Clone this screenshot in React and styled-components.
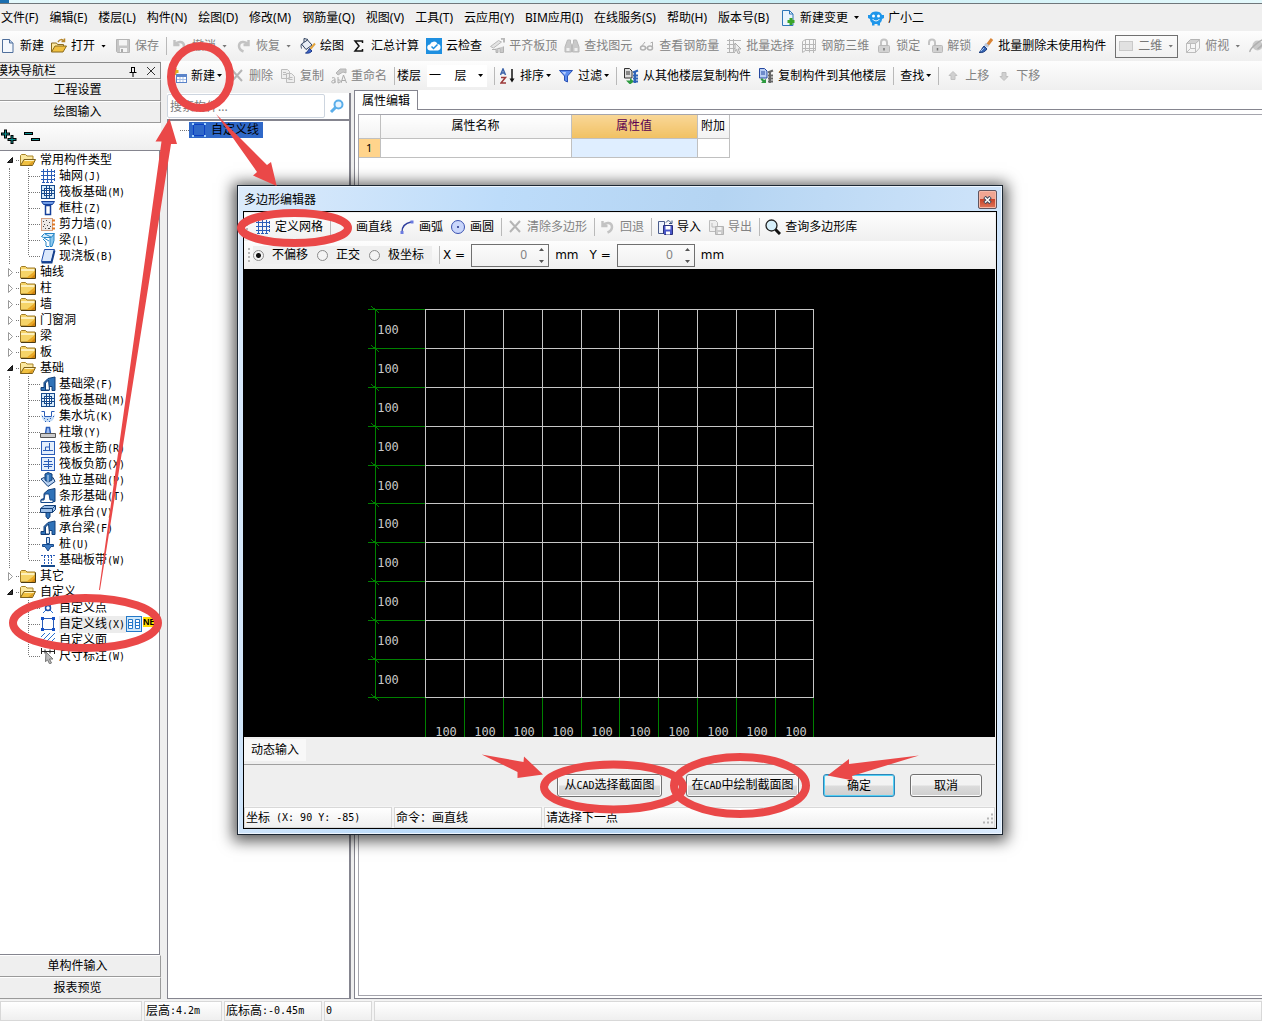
import React from "react";
import styled, { createGlobalStyle, css } from "styled-components";

const UI_FONT = `"Noto Sans", "Noto Sans CJK SC", sans-serif`;
const MONO_FONT = `"DejaVu Sans Mono", "Noto Sans CJK SC", monospace`;

const GlobalStyle = createGlobalStyle`
  * {
    box-sizing: border-box;
  }
  body {
    margin: 0;
    background: #efefef;
    color: #000;
    font-family: ${UI_FONT};
    font-size: 12px;
    line-height: 16px;
  }
  button,
  input,
  select {
    font: inherit;
    color: inherit;
    margin: 0;
  }
  ul {
    list-style: none;
    margin: 0;
    padding: 0;
  }
`;

/* ---------- icons ---------- */

const BLUE = "#2a5db8";

const folderClosed = (
  <>
    <path d="M0.500 3.500l1-1h4l1.500 1.500h8v10h-14.500z" fill="#f6d468" stroke="#a07c28" />
    <path d="M1 5h13.500v2h-13.500z" fill="#fdf0bc" />
    <path d="M6 14l9-7v7z" fill="#e8a928" />
    <path d="M11 14l4-4v4z" fill="#cf8410" />
    <path d="M1 14.500h14.500v-10" fill="none" stroke="#4c3c14" />
  </>
);

const folderOpen = (
  <>
    <path d="M0.500 13.500v-10l1-1h4l1.500 1.500h6v3.500" fill="#fbe8a0" stroke="#a88428" />
    <path d="M0.500 13.500l3.500-6h11.500l-3 6z" fill="#f0c040" stroke="#7d611d" />
    <path d="M4.500 8.500h9.500" stroke="#fff3c0" />
    <path d="M8 13l6-4.500-2 4.500z" fill="#dd9c20" />
  </>
);

const rods = (color) => (
  <path
    d="M1 3.500h14M1 7.500h14M1 11.500h14M3.500 1v14M7.500 1v14M11.500 1v14"
    fill="none"
    stroke={color}
  />
);

const raft = (
  <>
    <rect x="1.500" y="1.500" width="13" height="13" fill="#d8ebfa" stroke="#174a8c" />
    <rect x="4.500" y="4.500" width="7" height="7" fill="#fff" stroke="#174a8c" />
    <path d="M6.500 1v14M9.500 1v14M1 6.500h14M1 9.500h14" fill="none" stroke="#174a8c" />
  </>
);

const beamBlock = (
  <>
    <path d="M1 14.500v-3h3v-5l4-4 7-1.500v13.500h-3v-4h-3v4z" fill="#2f72b8" stroke="#123f78" />
    <path d="M5.500 14v-7l3-3 1 10z" fill="#fff" stroke="#123f78" />
  </>
);

const undoArrow = (
  <path d="M2.500 2v5h5M3 6.500c3-4 9-3 9 1.500 0 3-2 4.500-4.500 5.500" fill="none" stroke="#c3c3c3" strokeWidth="2.500" />
);

const ICONS = {
  newFile: (
    <>
      <path d="M2.500 1.500h7l3.500 3.500v9.500h-10.500z" fill="#f4f8fd" stroke="#4f6f9c" />
      <path d="M9.500 1.500v3.500h3.500" fill="#bcd0ea" stroke="#4f6f9c" />
    </>
  ),
  open: (
    <>
      <path d="M0.500 14v-9h5l1 1.500h6v3" fill="#fbe8a0" stroke="#8a6a1e" />
      <path d="M0.500 14l3.500-6h11.500l-3.500 6z" fill="#f0c040" stroke="#8a6a1e" />
      <path d="M7 4c2-3 4-3 6-1M13.500 0.500v3h-3" fill="none" stroke="#b5852a" strokeWidth="1.500" />
    </>
  ),
  save: (
    <>
      <path d="M1.500 1.500h13v13h-12l-1-1z" fill="#c6c6c6" stroke="#b4b4b4" />
      <path d="M4 2h8v5.500h-8z" fill="#f4f4f4" />
      <path d="M5 10h7v4h-7z" fill="#f4f4f4" />
      <path d="M6 11h2v3h-2z" fill="#aaa" />
    </>
  ),
  undo: undoArrow,
  redo: <g transform="translate(15 0) scale(-1 1)">{undoArrow}</g>,
  paint: (
    <>
      <path d="M1.500 6l6-4 4.500 5-6 4.500z" fill="#e9eef5" stroke="#2c3e5c" />
      <path d="M1.500 6c-1 2 0 3.500 0 4.500M4 4v-3.500l4 1" fill="none" stroke="#2c3e5c" />
      <path d="M15 5.500l-6 7" stroke="#e2a33a" strokeWidth="2" />
      <path d="M9.500 10.500l2.500 2.500c-1.500 2-4 2.500-6.500 2 2-1 2.500-2.500 4-4.500z" fill="#3b62c4" stroke="#1e3b8a" />
    </>
  ),
  sigma: <path d="M11.500 5v-2h-7.500l4 5-4 5h7.500v-2" fill="none" stroke="#111" strokeWidth="1.500" />,
  cloud: (
    <>
      <rect width="16" height="16" fill="#1e8fe0" />
      <path d="M4.500 12.500a3 3 0 0 1-.5-6 4 4 0 0 1 7.500-.5 3.300 3.300 0 0 1 .5 6.500z" fill="#fff" />
      <path d="M5.500 8.500l2 2 4-4" fill="none" stroke="#1e8fe0" strokeWidth="1.500" />
    </>
  ),
  slabTop: (
    <>
      <path d="M1.500 8.500l8-6 3 1.500-8 6z" fill="#e3e3e3" stroke="#bababa" />
      <path d="M3 11.500h4v3h2v-4h2v4h3.500v-6" fill="#c9c9c9" stroke="#b2b2b2" />
      <path d="M12 1l3-.5v4" fill="none" stroke="#bababa" strokeWidth="2" />
    </>
  ),
  binoculars: (
    <>
      <path d="M3.500 2h3v3l1 1.500v7.500h-6.500v-5zM9.500 2h3l2.500 7v5h-6.500v-7.500l1-1.500z" fill="#c9c9c9" stroke="#b9b9b9" />
      <path d="M2.500 10h3v3h-3zM10.500 10h3v3h-3z" fill="#efefef" />
    </>
  ),
  glasses: (
    <>
      <ellipse cx="4" cy="10" rx="2.500" ry="2" fill="none" stroke="#b0b0b0" strokeWidth="1.500" />
      <ellipse cx="11" cy="10" rx="2.500" ry="2" fill="none" stroke="#b0b0b0" strokeWidth="1.500" />
      <path d="M6.500 10h2M2 9l4-5M13.500 10v-6l-2 1" fill="none" stroke="#b0b0b0" />
    </>
  ),
  batch: (
    <>
      <path d="M1 2.500h14M1 6.500h8M1 10.500h8M1 14.500h8M3.500 1v14M7.500 1v14" fill="none" stroke="#b5b5b5" />
      <path d="M9 5l6 6h-3l2 4-2 .5-1.500-4-1.500 2z" fill="#eee" stroke="#ababab" />
    </>
  ),
  rebar3d: (
    <path d="M1.500 3.500l3-2v11l-3 2zM4.500 1.500h10v11h-10M8.500 1.500v13M12.500 1v14M1 6.500h14M1 10.500h14" fill="none" stroke="#b8b8b8" />
  ),
  lock: (
    <>
      <path d="M5 8v-3.500a3 3 0 0 1 6 0v3.500" fill="none" stroke="#c4c4c4" strokeWidth="2" />
      <rect x="2.500" y="7.500" width="11" height="7" rx="1" fill="#d2d2d2" stroke="#b9b9b9" />
      <path d="M8 10v2.500" stroke="#777" strokeWidth="1.500" />
    </>
  ),
  unlock: (
    <>
      <path d="M2 7v-2.500a3 3 0 0 1 6 0v3" fill="none" stroke="#c4c4c4" strokeWidth="2" />
      <rect x="5.500" y="7.500" width="10" height="7" rx="1" fill="#d2d2d2" stroke="#b9b9b9" />
      <path d="M10.500 10v2.500" stroke="#777" strokeWidth="1.500" />
    </>
  ),
  brush: (
    <>
      <path d="M14 1l-5 6.500" stroke="#d98436" strokeWidth="3" />
      <path d="M9.500 6l-2 2.500" stroke="#b9c6da" strokeWidth="4" />
      <path d="M6 8l3 3c-2 3-5 4-8 3.500 2.500-1.500 2.500-4 5-6.500z" fill="#3867b4" stroke="#1f3f80" />
      <path d="M3 13l3-3" stroke="#a9c8f4" />
    </>
  ),
  plane: <rect x="1.500" y="3.500" width="13" height="9" fill="#e1e1e1" stroke="#c9c9c9" />,
  cube: (
    <>
      <path d="M1.500 5.500l4-4h9.500l-4.500 4z" fill="#d2d2d2" stroke="#b3b3b3" />
      <path d="M1.500 5.500h9v9h-9zM10.500 5.500l4-4v8.500l-4 4.500M5.500 5.500v5l-4 4M5.500 10.500h5" fill="none" stroke="#bdbdbd" />
    </>
  ),
  orbit: (
    <>
      <circle cx="8.500" cy="7.500" r="5" fill="#c9c9c9" />
      <path d="M1 14c-1-3 12-14 14.500-12 1 2-4 7-7 9" fill="none" stroke="#b0b0b0" strokeWidth="1.500" />
    </>
  ),
  docPlus: (
    <>
      <path d="M2.500 0.500h7l3.500 3.500v11.500h-10.500z" fill="#eaf4fd" stroke="#2f77b8" />
      <path d="M9.500 0.500v3.500h3.500" fill="none" stroke="#2f77b8" />
      <path d="M11 8v7M7.500 11.500h7" stroke="#3aa528" strokeWidth="3" />
    </>
  ),
  robot: (
    <>
      <path d="M2 5c1-2.500 3-3.500 6-3.500s5 1 6 3.500h2v3l-2 1c0 2-1 3-2 4v2.500h-2.500v-1.500h-3v1.500h-2.500v-2.500c-1-1-2-2-2-4l-2-1v-3z" fill="#1f96ea" />
      <circle cx="5.500" cy="6" r="1.500" fill="#fff" />
      <circle cx="10.500" cy="6" r="1.500" fill="#fff" />
      <path d="M4.500 9c2 2.500 5 2.500 7 0" fill="none" stroke="#fff" />
    </>
  ),
  newItem: (
    <>
      <path d="M4 0v7M0.500 3.500h7" stroke="#e0b020" strokeWidth="3" />
      <rect x="5.500" y="6.500" width="10" height="8" fill="#fff" stroke="#5b84c9" />
      <path d="M6 8h9" stroke="#5b84c9" strokeWidth="2" />
      <path d="M6 11.500h9M9 9v5M12 9v5" stroke="#a9c1e8" />
    </>
  ),
  cross: <path d="M3 2l10 11M13 2l-10 11" stroke="#b5b5b5" strokeWidth="2" />,
  copy: (
    <path d="M1.500 1.500h6l2 2v7h-8zM6.500 5.500h5l3 3v6h-8zM3 4.500h3M3 6.500h3M8.500 9.500h4M8.500 11.500h4" fill="#eee" stroke="#bdbdbd" />
  ),
  rename: (
    <>
      <path d="M5 5l4-4h6v4l-3-1-5 3z" fill="#c9c9c9" stroke="#b5b5b5" />
      <path d="M1 10c2-1 3 0 3 1v4M4 12c-4 0-4 3-2 3s2-1 2-2M7 15v-6M7 12c3-1 3 3 0 3M10 15l2.500-8 3 8M11 12.500h3" fill="none" stroke="#aaa" />
    </>
  ),
  sort: (
    <>
      <path d="M0.500 7l2.500-6 2.500 6M1.500 5h3" fill="none" stroke="#3c62a8" strokeWidth="1.500" />
      <path d="M1 9.500h4.500l-4.500 5.500h5" fill="none" stroke="#9d3a3a" strokeWidth="1.500" />
      <path d="M12 1v12" stroke="#111" strokeWidth="1.500" />
      <path d="M9.500 10.500h5l-2.500 4z" fill="#111" />
    </>
  ),
  filter: (
    <>
      <path d="M1.500 2.500h13l-5 5.500v6l-3-1.500v-4.500z" fill="#5c8df0" stroke="#2a52b4" />
      <path d="M4 4h4l-1 3z" fill="#b9d0fb" />
    </>
  ),
  copyFrom: (
    <>
      <path d="M1.500 0.500h5l2.500 2.500v7h-7.500z" fill="#ddd" stroke="#333" />
      <path d="M3 4h4M3 6h4" stroke="#333" />
      <path d="M3 12.500h4v-2.500l4 3.500-4 3z" fill="#2d9a3f" />
      <path d="M10 4.500l5-2M10 7.500h5M10 10.500h5M10 13.500h5M12 3v12" stroke="#2d63b8" strokeWidth="2" />
    </>
  ),
  copyTo: (
    <>
      <path d="M1.500 0.500h5l2.500 2.500v7h-7.500z" fill="#b9cdf3" stroke="#2548a0" />
      <path d="M3 4h4M3 6h4" stroke="#2548a0" />
      <path d="M8 11v4h-5l1.500-1.500-2-2 1.500-1.500 2 2z" fill="#2d9a3f" />
      <path d="M10 4.500l5-2M10 7.500h5M10 10.500h5M10 13.500h5M12 3v12" stroke="#666" strokeWidth="2" />
    </>
  ),
  up: <path d="M8 3.500l4 4h-2v4h-4v-4h-2z" fill="#d0d0d0" stroke="#c0c0c0" />,
  down: <path d="M8 12.500l4-4h-2v-4h-4v4h-2z" fill="#d0d0d0" stroke="#c0c0c0" />,
  grid: (
    <>
      {rods(BLUE)}
      <path d="M14.500 2v12" stroke={BLUE} strokeDasharray="3 1" />
      <path d="M2 14.500h12" stroke={BLUE} strokeDasharray="3 1" />
    </>
  ),
  arc: (
    <>
      <path d="M3 13c0-6 4-9 9-10" fill="none" stroke="#2c3c9c" strokeWidth="1.300" />
      <path d="M11.500 1.500h3v3h-3zM1.500 12h3v3h-3z" fill="#6b7be0" />
    </>
  ),
  circle: (
    <>
      <circle cx="8" cy="8" r="6.500" fill="#c9d6fb" stroke="#3a50b0" />
      <circle cx="8" cy="8" r="1" fill="#1f2c80" />
    </>
  ),
  importFile: (
    <>
      <path d="M1.500 2.500h6v12h-6z" fill="#eef3fc" stroke="#4a5c8c" />
      <path d="M6.500 6.500h9v9h-8l-1-1z" fill="#4a57c8" stroke="#28307c" />
      <path d="M8.500 7h5v3.500h-5zM9 12.500h4v3h-4z" fill="#fff" />
      <path d="M9 3.500c2-3 4-2 5 1M15 1.500v3h-3" fill="none" stroke="#35507c" />
    </>
  ),
  exportFile: (
    <>
      <path d="M1.500 1.500h6l2 2v9h-8z" fill="#eee" stroke="#bcbcbc" />
      <path d="M7.500 7.500h8v8h-8z" fill="#ccc" stroke="#b2b2b2" />
      <path d="M9.500 8h4v3h-4zM10 13h3v2h-3z" fill="#f3f3f3" />
      <path d="M4 4v4h4" fill="none" stroke="#bcbcbc" />
    </>
  ),
  magnifier: (
    <>
      <circle cx="6.500" cy="6.500" r="5.500" fill="#d6effa" stroke="#222" strokeWidth="1.300" />
      <path d="M10.500 10.500l4.500 4.500" stroke="#111" strokeWidth="3" />
    </>
  ),
  search: (
    <>
      <circle cx="9.500" cy="6.500" r="4" fill="#e6f4ff" stroke="#5aaeea" strokeWidth="2" />
      <path d="M6.500 9.500l-4.500 4.500" stroke="#5aaeea" strokeWidth="3" />
    </>
  ),
  folderClosed,
  folderOpen,
  raft,
  column: (
    <>
      <path d="M1.500 1.500h13l-2 3h-9z" fill="#6f9be6" stroke="#16409a" />
      <path d="M5.500 5.500h5v9h-5z" fill="#fff" stroke="#16409a" strokeWidth="1.500" />
    </>
  ),
  shearWall: (
    <>
      <rect x="1.500" y="2.500" width="11" height="12" fill="#ece8e6" stroke="#d4a184" />
      <path d="M3 5.500h1M6 4.500h1M9 6.500h1M4 8.500h1M7 9.500h1M10 10.500h1M5 12.500h1M8 12.500h2M3 10.500h1" stroke="#444" />
      <path d="M12 4.500h3M12 8.500h3M12 12.500h3" stroke="#e07a26" strokeWidth="2" />
    </>
  ),
  beam: (
    <>
      <path d="M1.500 4.500l3-3h10l-3 4h-8z" fill="#d5ecfb" stroke="#2787c8" />
      <path d="M10 14.500v-8l4-4v6l-2 6z" fill="#8cc8ee" stroke="#2787c8" />
      <path d="M4 6l5 3M6 14v-4l-3-3M6 14.500h3M5 2l6 3" fill="none" stroke="#2787c8" />
    </>
  ),
  slab: (
    <>
      <path d="M4.500 1.500h10l-3 12h-10z" fill="#dbe8fb" stroke="#1f4fae" />
      <path d="M1.500 14.500h10l3-12" fill="none" stroke="#16408c" strokeWidth="2" />
    </>
  ),
  beamBlock,
  pit: (
    <>
      <path d="M1 6c1 6 3 8 7 8s6-2 7-8l-3 3h-8z" fill="#c3dbf6" />
      <path d="M1.500 3.500h3v5h7v-5h3" fill="none" stroke={BLUE} />
      <path d="M2 8.500h1M4 10.500h1M7 11.500h1M10 10.500h1M13 8.500h1M5 13.500h1M9 13.500h1" stroke={BLUE} />
    </>
  ),
  pier: (
    <>
      <path d="M5.500 9.500l1-6h3l1 6" fill="#9dbcf0" stroke={BLUE} strokeWidth="1.500" />
      <path d="M0.500 9.500h15v4h-15z" fill="#ccc" stroke="#555" />
    </>
  ),
  mainBar: (
    <>
      <rect x="1.500" y="1.500" width="13" height="13" fill="#e3eefc" stroke={BLUE} />
      <path d="M3 10.500h10M5.500 10v-3h4M9.500 3v8" fill="none" stroke={BLUE} />
    </>
  ),
  negBar: (
    <>
      <rect x="1.500" y="1.500" width="13" height="13" fill="#e3eefc" stroke={BLUE} />
      <path d="M8.500 3v10M4 5.500h8M4 10.500h8M3 8.500h10" fill="none" stroke={BLUE} />
    </>
  ),
  isolated: (
    <>
      <path d="M1 7l7 7.500 7-5-2-4-5 3-4-3z" fill="#b9d2f2" stroke="#123f78" />
      <path d="M5 2l3-1.500 4 1.500v6l-4 2-3-2z" fill="#2f72b8" stroke="#123f78" />
      <path d="M8 3v7" stroke="#cfe2f8" />
    </>
  ),
  strip: (
    <>
      <path d="M1 14.500v-3l3-1v-5l4-3.500 7-1.500v13z" fill="#2f72b8" stroke="#123f78" />
      <path d="M1 14.500v-2.500h3l1-6h4l1 6h3v2.500z" fill="#fff" stroke="#174a8c" />
    </>
  ),
  cap: (
    <>
      <path d="M0.500 4.500l4-3h11v4l-3 3h-12z" fill="#9dbfe8" stroke="#123f78" />
      <path d="M1 4.500h11.500v4M12.500 4.500l3-3" fill="none" stroke="#123f78" />
      <path d="M6 8.500h4v4l-2 2.500-2-2.500z" fill="#2f72b8" stroke="#123f78" />
    </>
  ),
  pile: (
    <>
      <path d="M6.500 1.500h3v6h-3z" fill="#cfe0f6" stroke="#174a8c" />
      <path d="M2.500 8.500h11v2h-2.500l-3 4.500-3-4.500h-2.500z" fill="#3f7cc4" stroke="#174a8c" />
    </>
  ),
  band: (
    <>
      <path d="M1 13.500h14M1 14.500h14" stroke="#174a8c" />
      <path d="M1 3.500h14" stroke={BLUE} strokeDasharray="2 1" />
      <path d="M4.500 4v9M8.500 4v9M11.500 4v9" stroke={BLUE} strokeDasharray="2 1" />
    </>
  ),
  customPoint: (
    <>
      <path d="M3 3l10 10M13 3l-10 10" stroke="#2a6fd0" />
      <circle cx="8" cy="8" r="2.500" fill="#fff" stroke="#1c4fa8" strokeWidth="1.500" />
    </>
  ),
  customLine: (
    <>
      <rect x="2.500" y="2.500" width="11" height="11" fill="none" stroke={BLUE} />
      <path d="M1 1h3v3h-3zM12 1h3v3h-3zM1 12h3v3h-3zM12 12h3v3h-3z" fill="#1450c8" />
    </>
  ),
  customLineSelected: (
    <>
      <rect x="2.500" y="2.500" width="11" height="11" fill="none" stroke="#0a3fc4" />
      <path d="M1 1h2v2h-2zM13 1h2v2h-2zM1 13h2v2h-2zM13 13h2v2h-2z" fill="#9fd0ff" />
    </>
  ),
  customFace: (
    <path d="M1 5l4-4M1 10l9-9M1 15l14-14M6 15l9-9M11 15l4-4" fill="none" stroke="#2a6fd0" />
  ),
  dimension: (
    <>
      <path d="M1.500 0v6M14.500 0v6M2 3.500h12M5 1.500v4M10 1.500v4" fill="none" stroke="#222" />
      <path d="M6 4l7 7h-3.500l2 4-2 .8-2-4-2 2z" fill="#bbb" stroke="#777" />
    </>
  ),
  columns: (
    <>
      <rect x="0.500" y="0.500" width="15" height="15" fill="#cfe8fb" stroke="#2478c8" />
      <path d="M2.500 3.500h4v9h-4zM9.500 3.500h4v9h-4zM2.500 6.500h4M2.500 9.500h4M9.500 6.500h4M9.500 9.500h4" fill="#fff" stroke="#2478c8" />
    </>
  ),
};

const StyledSvg = styled.svg`
  display: block;
  flex: none;
`;

const Icon = ({ name }) => (
  <StyledSvg width="16" height="16" viewBox="0 0 16 16" aria-hidden="true">
    {ICONS[name]}
  </StyledSvg>
);

/* ---------- shared controls ---------- */

const plainButton = css`
  border: 0;
  padding: 0;
  background: none;
  white-space: nowrap;
`;

const StyledToolButton = styled.button`
  ${plainButton}
  display: flex;
  align-items: center;
  gap: 4px;
  height: 24px;
  color: ${({ disabled }) => (disabled ? "#838383" : "#000")};
`;

const StyledCaret = styled.span`
  flex: none;
  width: 5px;
  height: 3px;
  margin: ${({ $tight }) => ($tight ? "0 0 0 -2px" : "0 2px")};
  background: ${({ $muted }) => ($muted ? "#777" : "#000")};
  clip-path: polygon(0 0, 100% 0, 50% 100%);
`;

const StyledSeparator = styled.span`
  flex: none;
  width: 1px;
  height: 18px;
  margin-right: ${({ $close }) => ($close ? -2 : -1)}px;
  background: #b9b9b9;
`;

const ToolButton = ({ icon, label, disabled, caret, tight }) => (
  <StyledToolButton type="button" disabled={disabled}>
    {icon && <Icon name={icon} />}
    {label}
    {caret && <StyledCaret $muted={disabled} $tight={tight} />}
  </StyledToolButton>
);

const StyledLatin = styled.span`
  font-family: ${MONO_FONT};
  font-size: 10px;
`;

// the narrow half-width letters sit beside 12px ideographs
const MonoText = ({ children }) =>
  children
    .split(/([\x20-\x7e]+)/)
    .map((part, i) => (i % 2 ? <StyledLatin key={i}>{part}</StyledLatin> : part));

/* ---------- window frame ---------- */

const StyledApp = styled.div`
  position: relative;
  display: flex;
  flex-direction: column;
  min-height: 100vh;
  overflow: hidden;
`;

const StyledTitleStrip = styled.div`
  height: 4px;
  border-bottom: 1px solid #70777b;
  background: linear-gradient(90deg, #1b6fb0 9px, #e4f9fc 9px, #c9eef5 60%, #e4f9fc);
`;

const StyledMenuBar = styled.nav`
  display: flex;
  align-items: center;
  gap: 11px;
  height: 27px;
  padding-left: 1px;
  background: #efefef;
`;

const StyledMenuButton = styled.button`
  ${plainButton}
`;

const StyledMenuExtras = styled.div`
  display: flex;
  gap: 7px;
`;

const StyledToolbar = styled.div`
  display: flex;
  align-items: center;
  gap: 7px;
  height: ${({ $height }) => $height || 30}px;
  padding-left: ${({ $inset }) => $inset || 0}px;
  background: linear-gradient(#fdfdfd, #efefef);
`;

const StyledModePicker = styled.button`
  ${plainButton}
  display: flex;
  align-items: center;
  gap: 4px;
  height: 23px;
  margin-left: 2px;
  padding: 0 2px;
  border: 1px solid #707070;
  color: #777;
`;

const StyledBody = styled.div`
  display: flex;
  flex: 1;
  min-height: 0;
`;

/* ---------- navigation sidebar ---------- */

const StyledSidebar = styled.aside`
  display: flex;
  flex-direction: column;
  flex: none;
  width: 161px;
  padding-bottom: 1px;
`;

const StyledSidebarTitle = styled.header`
  display: flex;
  align-items: center;
  justify-content: space-between;
  height: 17px;
  margin-top: 1px;
  padding-right: 4px;
  border: 1px solid #8a8a8a;
  border-left: 0;

  h2 {
    margin: 0 0 0 -4px;
    font-size: 12px;
    font-weight: normal;
  }

  svg {
    flex: none;
  }
`;

const StyledNavButton = styled.button`
  flex: none;
  height: 22px;
  padding: 0 5px 0 0;
  border: 1px solid #9a9a9a;
  border-left: 0;
  border-top-color: #fff;
  background: #efefef;
`;

const StyledExpandBar = styled.div`
  display: flex;
  align-items: center;
  gap: 6px;
  height: 28px;
  border-bottom: 1px solid #85858f;
  background: linear-gradient(#fdfdfd, #efefef);
`;

const StyledTree = styled.ul`
  flex: 1;
  margin-right: 1px;
  padding-top: 1px;
  border-right: 1px solid #85858f;
  border-bottom: 1px solid #85858f;
  background: #fff;
`;

const StyledGroupRow = styled.div`
  display: flex;
  align-items: center;
  height: 16px;
  padding-left: 6px;
  white-space: nowrap;

  > span {
    margin-left: 4px;
  }
`;

const StyledChildren = styled.ul`
  margin-left: 9px;
  padding-left: ${({ $last }) => ($last ? 19 : 18)}px;
  border-left: ${({ $last }) => ($last ? "0" : "1px dotted #777")};
`;

const StyledLeaf = styled.li`
  display: flex;
  align-items: center;
  height: 16px;
  white-space: nowrap;

  > span {
    margin-left: 3px;
    padding-right: 1px;
    background: ${({ $current }) => ($current ? "#ececec" : "none")};
  }
`;

const StyledBadge = styled.b`
  width: 14px;
  height: 10px;
  margin: 0 0 5px 1px;
  background: #ffdc00;
  font: bold 9px/10px "Liberation Sans", sans-serif;
`;

const TREE = [
  {
    label: "常用构件类型",
    open: true,
    items: [
      ["grid", "轴网(J)"],
      ["raft", "筏板基础(M)"],
      ["column", "框柱(Z)"],
      ["shearWall", "剪力墙(Q)"],
      ["beam", "梁(L)"],
      ["slab", "现浇板(B)"],
    ],
  },
  { label: "轴线" },
  { label: "柱" },
  { label: "墙" },
  { label: "门窗洞" },
  { label: "梁" },
  { label: "板" },
  {
    label: "基础",
    open: true,
    items: [
      ["beamBlock", "基础梁(F)"],
      ["raft", "筏板基础(M)"],
      ["pit", "集水坑(K)"],
      ["pier", "柱墩(Y)"],
      ["mainBar", "筏板主筋(R)"],
      ["negBar", "筏板负筋(X)"],
      ["isolated", "独立基础(P)"],
      ["strip", "条形基础(T)"],
      ["cap", "桩承台(V)"],
      ["beamBlock", "承台梁(F)"],
      ["pile", "桩(U)"],
      ["band", "基础板带(W)"],
    ],
  },
  { label: "其它" },
  {
    label: "自定义",
    open: true,
    items: [
      ["customPoint", "自定义点"],
      ["customLine", "自定义线(X)"],
      ["customFace", "自定义面"],
      ["dimension", "尺寸标注(W)"],
    ],
  },
];

const Branch = ({ last }) => (
  <StyledSvg width="12" height="16" aria-hidden="true">
    <path
      d={`M0.5 0v${last ? 8 : 16}M1 8.500h11`}
      fill="none"
      stroke="#777"
      strokeDasharray="1 1"
    />
  </StyledSvg>
);

const Twisty = ({ open }) => (
  <StyledSvg width="14" height="16" aria-hidden="true">
    {open ? (
      <path d="M6.500 5.500v5h-5z" fill="#333" stroke="#111" />
    ) : (
      <path d="M2.500 4.500l4 4-4 4z" fill="#fff" stroke="#9a9a9a" />
    )}
    <path d="M10 8.500h4" stroke="#777" strokeDasharray="1 1" />
  </StyledSvg>
);

const ComponentTree = () => (
  <StyledTree>
    {TREE.map(({ label, open, items }, groupIndex) => (
      <li key={label}>
        <StyledGroupRow>
          <Twisty open={open} />
          <Icon name={open ? "folderOpen" : "folderClosed"} />
          <span>{label}</span>
        </StyledGroupRow>
        {items && (
          <StyledChildren $last={groupIndex === TREE.length - 1}>
            {items.map(([icon, text], i) => {
              const current = text === "自定义线(X)";
              return (
                <StyledLeaf key={text} $current={current}>
                  <Branch last={i === items.length - 1} />
                  <Icon name={icon} />
                  <span>
                    <MonoText>{text}</MonoText>
                  </span>
                  {current && (
                    <>
                      <Icon name="columns" />
                      <StyledBadge>NE</StyledBadge>
                    </>
                  )}
                </StyledLeaf>
              );
            })}
          </StyledChildren>
        )}
      </li>
    ))}
  </StyledTree>
);

const Sidebar = () => (
  <StyledSidebar>
    <StyledSidebarTitle>
      <h2>模块导航栏</h2>
      <svg width="28" height="12" aria-hidden="true">
        <path d="M3.500 2v5M6.500 2v5M3 2.500h4M1.500 7.500h7M5 8v4" stroke="#000" />
        <path d="M19 2l8 8M27 2l-8 8" stroke="#333" />
      </svg>
    </StyledSidebarTitle>
    <StyledNavButton type="button">工程设置</StyledNavButton>
    <StyledNavButton type="button">绘图输入</StyledNavButton>
    <StyledExpandBar>
      <svg width="17" height="16" aria-hidden="true">
        <path d="M5.500 0.500v9M1 5h9M12 6v9M7.500 10.500h9" stroke="#000" strokeWidth="3" />
        <path d="M5.500 1.500v7M2 5h7M12 7v7M8.500 10.500h7" stroke="#0c9090" />
      </svg>
      <svg width="18" height="16" aria-hidden="true">
        <path d="M1 4.500h9M8 10.500h9" stroke="#000" strokeWidth="3" />
        <path d="M2 4.500h7M9 10.500h7" stroke="#0c9090" />
      </svg>
    </StyledExpandBar>
    <ComponentTree />
    <StyledNavButton type="button">单构件输入</StyledNavButton>
    <StyledNavButton type="button">报表预览</StyledNavButton>
  </StyledSidebar>
);

/* ---------- component list and properties ---------- */

const StyledMain = styled.main`
  display: flex;
  flex: 1;
  flex-direction: column;
  min-width: 0;
`;

const StyledPanels = styled.div`
  display: flex;
  flex: 1;
`;

const StyledListPanel = styled.section`
  display: flex;
  flex-direction: column;
  width: 184px;
  margin: 3px 0 1px 6px;
  border-right: 2px solid #85858f;
`;

const StyledSearchRow = styled.div`
  display: flex;
  align-items: center;
  gap: 4px;
  height: 26px;
  background: #fff;

  input {
    width: 158px;
    height: 24px;
    padding: 0 2px;
    border: 1px solid #cdd5df;
    border-radius: 2px;
    background: #fff;
  }

  input::placeholder {
    color: #7c7c7c;
    opacity: 1;
  }

  button {
    ${plainButton}
  }
`;

const StyledList = styled.ul`
  flex: 1;
  padding: 1px 0 0 12px;
  border: 1px solid #85858f;
  border-top-width: 2px;
  border-right: 0;
  background: #fff;
`;

const StyledListItem = styled.li`
  display: flex;
  align-items: center;

  &::before {
    content: "";
    width: 9px;
    border-top: 1px dotted #777;
  }
`;

const StyledSelected = styled.span`
  display: flex;
  align-items: center;
  gap: 4px;
  height: 16px;
  padding: 0 4px 0 2px;
  background: #2f68c8;
`;

const StyledPropertyPanel = styled.section`
  display: flex;
  flex: 1;
  flex-direction: column;
  margin: 0 0 1px 3px;
  background: #fff;
`;

const StyledTabRow = styled.div`
  display: flex;
  height: 20px;

  button {
    ${plainButton}
    width: 64px;
    border: 1px solid #85858f;
    border-bottom: 0;
  }

  &::after {
    content: "";
    flex: 1;
    border-bottom: 1px solid #85858f;
  }
`;

const StyledTabPage = styled.div`
  flex: 1;
  padding: 4px 0 2px 3px;
  border-left: 1px solid #85858f;
  border-bottom: 1px solid #85858f;
`;

const StyledTableFrame = styled.div`
  height: 100%;
  border: 1px solid #a5a5ad;
  border-right: 0;
`;

const StyledTable = styled.table`
  border-collapse: collapse;
  table-layout: fixed;
  width: 370px;

  th,
  td {
    padding: 0;
    border: 1px solid #c0c0c0;
    border-top: 0;
    border-left: 0;
    font-weight: normal;
    text-align: center;
    white-space: nowrap;
  }

  thead tr {
    height: 23px;
  }
  tbody tr {
    height: 19px;
  }
  thead th {
    background: linear-gradient(#fff, #f2f2f2);
  }
  thead th:nth-child(3) {
    background: linear-gradient(#f9d797, #f1c163);
    color: #5a0050;
  }
  tbody th {
    background: #ffd48c;
    font-size: 11px;
  }
  tbody td:nth-child(3) {
    background: #dfeeff;
  }
`;

const COLUMN_WIDTHS = [21, 191, 126, 32];

const PropertyTable = () => (
  <StyledTable>
    <colgroup>
      {COLUMN_WIDTHS.map((width) => (
        <col key={width} width={width} />
      ))}
    </colgroup>
    <thead>
      <tr>
        <th aria-label="序号" />
        <th>属性名称</th>
        <th>属性值</th>
        <th>附加</th>
      </tr>
    </thead>
    <tbody>
      <tr>
        <th>1</th>
        <td />
        <td />
        <td />
      </tr>
    </tbody>
  </StyledTable>
);

const StyledFloorPicker = styled.div`
  display: flex;
  align-items: center;
  gap: 6px;
  margin-left: -4px;
`;

const StyledFloorValue = styled.button`
  ${plainButton}
  display: flex;
  align-items: center;
  justify-content: space-between;
  width: 60px;
  height: 22px;
  padding: 0 4px 0 2px;
  background: #fff;
`;

const ComponentToolbar = () => (
  <StyledToolbar $height={29} $inset={10}>
    <ToolButton icon="newItem" label="新建" caret tight />
    <ToolButton icon="cross" label="删除" disabled />
    <ToolButton icon="copy" label="复制" disabled />
    <ToolButton icon="rename" label="重命名" disabled />
    <StyledSeparator />
    <StyledFloorPicker>
      楼层
      <StyledFloorValue type="button">
        <span>一</span>
        <span>层</span>
        <StyledCaret $tight />
      </StyledFloorValue>
    </StyledFloorPicker>
    <StyledSeparator $close />
    <ToolButton icon="sort" label="排序" caret tight />
    <ToolButton icon="filter" label="过滤" caret tight />
    <StyledSeparator />
    <ToolButton icon="copyFrom" label="从其他楼层复制构件" />
    <ToolButton icon="copyTo" label="复制构件到其他楼层" />
    <StyledSeparator />
    <ToolButton label="查找" caret tight />
    <StyledSeparator />
    <ToolButton icon="up" label="上移" disabled />
    <ToolButton icon="down" label="下移" disabled />
  </StyledToolbar>
);

/* ---------- status bars ---------- */

const StyledStatusBar = styled.footer`
  display: flex;
  gap: 2px;
  height: ${({ $height }) => $height || 21}px;
  padding-top: 1px;
  background: #f4f4f4;
`;

const StyledStatusCell = styled.span`
  display: flex;
  align-items: center;
  flex: ${({ $width }) => ($width ? "none" : 1)};
  width: ${({ $width }) => ($width ? `${$width}px` : "auto")};
  padding-left: 1px;
  border: 1px solid #d8d8d8;
  background: linear-gradient(#fff, #efefef);
  white-space: pre;
`;

/* ---------- polygon editor ---------- */

const StyledDialog = styled.section`
  position: absolute;
  top: 185px;
  left: 237px;
  display: flex;
  flex-direction: column;
  width: 766px;
  padding: 0 5px 5px;
  border: 1px solid #1c2733;
  background: linear-gradient(100deg, #dcebfb, #bddcfa 30%, #b4d4f2 55%, #d9eafd);
  box-shadow: inset 0 0 0 1px #eef6ff, 0 2px 14px 4px rgba(0, 0, 0, 0.65);
`;

const StyledDialogTitle = styled.header`
  display: flex;
  align-items: center;
  justify-content: space-between;
  height: 25px;
  padding: 2px 0 0 1px;

  h1 {
    margin: 0;
    font-size: 12px;
    font-weight: normal;
  }

  button {
    display: flex;
    align-items: center;
    justify-content: center;
    width: 19px;
    height: 19px;
    padding: 0;
    border: 1px solid #5f5560;
    border-radius: 2px;
    background: linear-gradient(#f0a592 45%, #c8432a 50%, #e0765a);
    box-shadow: inset 0 0 0 1px #f6b9a8;
  }
`;

const StyledClient = styled.div`
  border: 1px solid #000;
  padding: 1px 1px 0 0;
  background: #efefef;
`;

const StyledGrip = styled.span`
  flex: none;
  width: 2px;
  height: 14px;
  background: repeating-linear-gradient(#b8b8b8 0 2px, transparent 2px 4px);
`;

const StyledLineButton = styled(StyledToolButton)`
  margin-left: 20px;
`;

const StyledRadio = styled.label`
  display: flex;
  align-items: center;
  gap: 8px;
  white-space: nowrap;

  input {
    appearance: none;
    width: 11px;
    height: 11px;
    border: 1px solid #8b8b8b;
    border-radius: 50%;
    background: #f4f4f4;
  }

  input:checked {
    background: radial-gradient(#111 0 2px, #f4f4f4 3px);
  }
`;

const StyledRadioGroup = styled.div`
  display: flex;
  align-items: center;
  gap: 9px;
  height: 18px;
  margin-left: -4px;
  padding-right: 8px;
  background: #efefef;
`;

const StyledAxis = styled.label`
  display: flex;
  align-items: center;
  gap: 6px;
  margin-left: -2px;
  padding-right: 6px;
  font-family: "DejaVu Sans", sans-serif;
  white-space: nowrap;
`;

const StyledSpin = styled.span`
  display: flex;
  align-items: center;
  width: 78px;
  height: 23px;
  padding-right: 3px;
  border: 1px solid #707070;

  input {
    flex: 1;
    min-width: 0;
    padding: 0 11px 0 0;
    border: 0;
    background: none;
    color: #838383;
    font-family: ${UI_FONT};
    text-align: right;
  }
`;

const StyledCanvas = styled.div`
  height: 468px;
  background: #000;

  svg {
    display: block;
    overflow: visible;
  }

  text {
    fill: #c8c8c8;
    font-family: ${MONO_FONT};
    font-size: 12px;
    text-anchor: middle;
  }
`;

const StyledDynamicInput = styled.div`
  height: 28px;
  padding-top: 2px;
  border-bottom: 1px solid #a0a0a0;

  button {
    ${plainButton}
    height: 22px;
    padding: 0 7px;
    background: #f8f8f8;
  }
`;

const StyledActions = styled.div`
  display: flex;
  align-items: center;
  justify-content: flex-end;
  gap: 15px;
  height: 41px;
  padding-right: 13px;
`;

const StyledPushButton = styled.button`
  height: 23px;
  width: ${({ $width }) => $width}px;
  margin-left: ${({ $apart }) => ($apart ? "9px" : 0)};
  padding: 0;
  border: 1px solid ${({ $primary }) => ($primary ? "#2f86b8" : "#707070")};
  border-radius: 3px;
  background: linear-gradient(#f3f3f3 48%, #dcdcdc 52%, #cfcfcf);
  box-shadow: inset 0 0 0 1px ${({ $primary }) => ($primary ? "#52d0f5" : "#fbfbfb")};
  white-space: nowrap;
`;

const StyledHint = styled.span`
  flex: 1;
`;

const LINES = [0, 39, 78, 117, 156, 194, 233, 272, 311, 350, 388];
const LEFT = 181;
const TOP = 40;
const SPAN = 388;

const SectionGrid = () => (
  <StyledCanvas>
    <svg width="751" height="468" shapeRendering="crispEdges">
      <path d={`M131.5 ${TOP}v${SPAN}`} stroke="#008000" />
      {LINES.map((n) => (
        <g key={n} fill="none">
          <path
            d={`M124 ${TOP + n}.5H${LEFT}M127 ${TOP + n - 3}l8 7M${LEFT + n}.5 ${TOP + SPAN}V468`}
            stroke="#008000"
          />
          <path
            d={`M${LEFT} ${TOP + n}.5h${SPAN + 1}M${LEFT + n}.5 ${TOP}v${SPAN}`}
            stroke="#c6c6c6"
          />
        </g>
      ))}
      {LINES.slice(0, -1).map((n) => (
        <g key={n}>
          <text x="144" y={TOP + n + 25}>100</text>
          <text x={LEFT + n + 21} y="467">100</text>
        </g>
      ))}
    </svg>
  </StyledCanvas>
);

const AxisField = ({ axis }) => (
  <StyledAxis>
    {axis} =
    <StyledSpin>
      <input defaultValue="0" disabled />
      <svg width="7" height="17" aria-hidden="true">
        <path d="M1 4l2.500-3 2.500 3zM1 13l2.500 3 2.500-3z" fill="#555" />
      </svg>
    </StyledSpin>
    mm
  </StyledAxis>
);

const PolygonDialog = () => (
  <StyledDialog role="dialog" aria-label="多边形编辑器">
    <StyledDialogTitle>
      <h1>多边形编辑器</h1>
      <button type="button" aria-label="关闭">
        <svg width="9" height="8" aria-hidden="true">
          <path d="M1.500 1l6 6M7.500 1l-6 6" stroke="#444b5c" strokeWidth="3.500" />
          <path d="M2 1.500l5 5M7 1.500l-5 5" stroke="#fff" strokeWidth="1.500" />
        </svg>
      </button>
    </StyledDialogTitle>
    <StyledClient>
      <StyledToolbar $height={28} $inset={2}>
        <StyledGrip />
        <ToolButton icon="grid" label="定义网格" />
        <StyledSeparator $close />
        <StyledLineButton type="button">画直线</StyledLineButton>
        <ToolButton icon="arc" label="画弧" />
        <ToolButton icon="circle" label="画圆" />
        <StyledSeparator $close />
        <ToolButton icon="cross" label="清除多边形" disabled />
        <StyledSeparator $close />
        <ToolButton icon="undo" label="回退" disabled />
        <StyledSeparator $close />
        <ToolButton icon="importFile" label="导入" />
        <ToolButton icon="exportFile" label="导出" disabled />
        <StyledSeparator $close />
        <ToolButton icon="magnifier" label="查询多边形库" />
      </StyledToolbar>
      <StyledToolbar $height={28} $inset={4}>
        <StyledGrip />
        <StyledRadioGroup>
          <StyledRadio>
            <input type="radio" name="offset" defaultChecked />
            不偏移
          </StyledRadio>
          <StyledRadio>
            <input type="radio" name="offset" />
            正交
          </StyledRadio>
          <StyledRadio>
            <input type="radio" name="offset" />
            极坐标
          </StyledRadio>
        </StyledRadioGroup>
        <StyledSeparator $close />
        <AxisField axis="X" />
        <AxisField axis="Y" />
      </StyledToolbar>
      <SectionGrid />
      <StyledDynamicInput>
        <button type="button">动态输入</button>
      </StyledDynamicInput>
      <StyledActions>
        <StyledPushButton type="button" $width={105}>
          从<StyledLatin>CAD</StyledLatin>选择截面图
        </StyledPushButton>
        <StyledPushButton type="button" $width={113} $apart>
          在<StyledLatin>CAD</StyledLatin>中绘制截面图
        </StyledPushButton>
        <StyledPushButton type="button" $width={72} $primary $apart>
          确定
        </StyledPushButton>
        <StyledPushButton type="button" $width={72}>
          取消
        </StyledPushButton>
      </StyledActions>
      <StyledStatusBar $height={22}>
        <StyledStatusCell $width={148}>
          <MonoText>坐标 (X: 90 Y: -85)</MonoText>
        </StyledStatusCell>
        <StyledStatusCell $width={148}>命令：画直线</StyledStatusCell>
        <StyledStatusCell>
          <StyledHint>请选择下一点</StyledHint>
          <svg width="12" height="12" aria-hidden="true">
            <path d="M9 2.500h2M5 6.500h2M9 6.500h2M1 10.500h2M5 10.500h2M9 10.500h2" stroke="#b5b5b5" strokeWidth="2" />
          </svg>
        </StyledStatusCell>
      </StyledStatusBar>
    </StyledClient>
  </StyledDialog>
);

/* ---------- red guide marks ---------- */

const StyledMarks = styled.svg`
  position: absolute;
  top: 0;
  left: 0;
  pointer-events: none;
`;

const GuideMarks = () => (
  <StyledMarks width="1010" height="840" fill="#ea4848" aria-hidden="true">
    <g fill="none" stroke="#ea4848" strokeWidth="8">
      <ellipse cx="200.500" cy="77" rx="29.500" ry="31" />
      <ellipse cx="294.500" cy="228" rx="53.500" ry="15" />
      <ellipse cx="85.500" cy="623" rx="72.500" ry="25" />
      <ellipse cx="613.500" cy="787" rx="69.500" ry="22.500" />
      <ellipse cx="740" cy="785.500" rx="66" ry="28.500" />
    </g>
    <path d="M99 590L161.500 141.500H155.500L169.500 118.500L177 144H171L100 590z" />
    <path d="M216 114L267 165L271 162L276.700 186L253 175.500L257 172z" />
    <path d="M481.700 754.500L523.500 762L524 756.500L543 774.500L517.500 778V772z" />
    <path d="M919 755.500L849 764V759L827.500 775.500L853 780.500L852 776z" />
  </StyledMarks>
);

const MENUS = [
  "文件(F)",
  "编辑(E)",
  "楼层(L)",
  "构件(N)",
  "绘图(D)",
  "修改(M)",
  "钢筋量(Q)",
  "视图(V)",
  "工具(T)",
  "云应用(Y)",
  "BIM应用(I)",
  "在线服务(S)",
  "帮助(H)",
  "版本号(B)",
];

const App = () => (
  <StyledApp>
    <GlobalStyle />
    <StyledTitleStrip />
    <StyledMenuBar>
      {MENUS.map((menu) => (
        <StyledMenuButton type="button" key={menu}>
          {menu}
        </StyledMenuButton>
      ))}
      <StyledMenuExtras>
        <ToolButton icon="docPlus" label="新建变更" caret />
        <ToolButton icon="robot" label="广小二" />
      </StyledMenuExtras>
    </StyledMenuBar>
    <StyledToolbar>
      <ToolButton icon="newFile" label="新建" />
      <ToolButton icon="open" label="打开" caret />
      <ToolButton icon="save" label="保存" disabled />
      <StyledSeparator $close />
      <ToolButton icon="undo" label="撤消" caret disabled />
      <ToolButton icon="redo" label="恢复" caret disabled />
      <ToolButton icon="paint" label="绘图" />
      <ToolButton icon="sigma" label="汇总计算" />
      <ToolButton icon="cloud" label="云检查" />
      <ToolButton icon="slabTop" label="平齐板顶" disabled />
      <ToolButton icon="binoculars" label="查找图元" disabled />
      <ToolButton icon="glasses" label="查看钢筋量" disabled />
      <ToolButton icon="batch" label="批量选择" disabled />
      <ToolButton icon="rebar3d" label="钢筋三维" disabled />
      <ToolButton icon="lock" label="锁定" disabled />
      <ToolButton icon="unlock" label="解锁" disabled />
      <ToolButton icon="brush" label="批量删除未使用构件" />
      <StyledModePicker type="button">
        <Icon name="plane" />
        二维
        <StyledCaret $muted />
      </StyledModePicker>
      <ToolButton icon="cube" label="俯视" caret disabled />
      <ToolButton icon="orbit" disabled />
    </StyledToolbar>
    <StyledBody>
      <Sidebar />
      <StyledMain>
        <ComponentToolbar />
        <StyledPanels>
          <StyledListPanel>
            <StyledSearchRow>
              <input type="text" placeholder="搜索构件..." aria-label="搜索构件" />
              <button type="button" aria-label="搜索">
                <Icon name="search" />
              </button>
            </StyledSearchRow>
            <StyledList>
              <StyledListItem>
                <StyledSelected>
                  <Icon name="customLineSelected" />
                  自定义线
                </StyledSelected>
              </StyledListItem>
            </StyledList>
          </StyledListPanel>
          <StyledPropertyPanel>
            <StyledTabRow>
              <button type="button">属性编辑</button>
            </StyledTabRow>
            <StyledTabPage>
              <StyledTableFrame>
                <PropertyTable />
              </StyledTableFrame>
            </StyledTabPage>
          </StyledPropertyPanel>
        </StyledPanels>
      </StyledMain>
    </StyledBody>
    <StyledStatusBar>
      <StyledStatusCell $width={142} />
      <StyledStatusCell $width={78}>
        <MonoText>层高:4.2m</MonoText>
      </StyledStatusCell>
      <StyledStatusCell $width={98}>
        <MonoText>底标高:-0.45m</MonoText>
      </StyledStatusCell>
      <StyledStatusCell $width={48}>
        <MonoText>0</MonoText>
      </StyledStatusCell>
      <StyledStatusCell />
    </StyledStatusBar>
    <PolygonDialog />
    <GuideMarks />
  </StyledApp>
);

export default App;
